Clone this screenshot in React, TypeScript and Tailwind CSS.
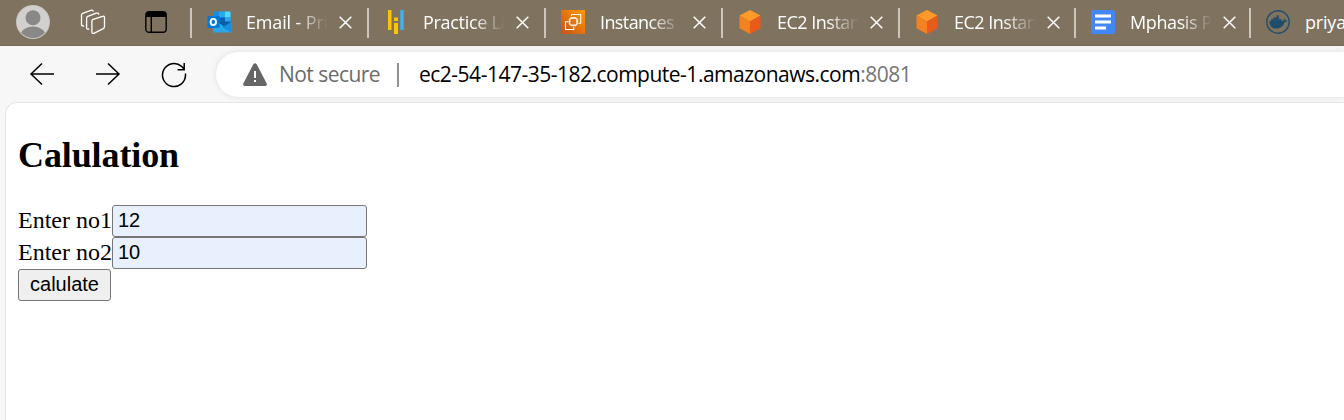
import type { ReactNode } from "react";

function OutlookIcon() {
  return (
    <svg width="25" height="24" viewBox="0 0 25 24">
      <rect x="6.500" y="1.500" width="17" height="12" rx="1" fill="#1490df" />
      <path d="M12 1.500h6v6h-6z" fill="#28a8ea" />
      <path d="M18 1.500h4.500a1 1 0 0 1 1 1v5H18z" fill="#50d9ff" />
      <path d="M18 7.500h5.500v5H18z" fill="#28a8ea" />
      <path d="M12 7.500h6v5h-6z" fill="#0364b8" />
      <path d="M6.500 12h11l7-.5V21a1.500 1.500 0 0 1-1.500 1.500H7.500A1.500 1.500 0 0 1 6 21z" fill="#28a8ea" />
      <path d="M24.500 11.500V21a1.500 1.500 0 0 1-.8 1.300L15 17z" fill="#1490df" />
      <path d="M12 13l5 3.500 7.500-5H18l-6-1z" fill="#0a5ea8" />
      <rect x="0.500" y="6" width="12" height="12" rx="1" fill="#0078d4" />
      <ellipse cx="6.300" cy="12" rx="2.700" ry="3.100" fill="none" stroke="#fff" strokeWidth="1.900" />
    </svg>
  );
}

function BarsIcon() {
  return (
    <svg width="24" height="24" viewBox="0 0 24 24">
      <path d="M0 0h3.500v20H0zM6 7.500h4V11H6zM6 13h4v11H6z" fill="#ffc400" />
      <path d="M12.300 0h3.400v20h-3.400z" fill="#3fb1ee" />
    </svg>
  );
}

function Ec2Icon() {
  return (
    <svg width="24" height="24" viewBox="0 0 24 24">
      <defs>
        <linearGradient id="ec2" x1="0" y1="1" x2="1" y2="0">
          <stop offset="0" stopColor="#c8511b" />
          <stop offset="1" stopColor="#ff9900" />
        </linearGradient>
      </defs>
      <path d="M0 0h24v24H0z" fill="url(#ec2)" />
      <g fill="none" stroke="#fff" strokeWidth="1.100">
        <rect x="8.900" y="8.100" width="7" height="7" rx="1.200" />
        <path d="M10.700 8V6.900M12.400 8V6.900M14.100 8V6.900M10.700 15.200v1.100M12.400 15.200v1.100M14.100 15.200v1.100M8.800 9.900H7.700M8.800 11.600H7.700M8.800 13.300H7.700M16 9.900h1.100M16 11.600h1.100M16 13.300h1.100" />
        <path d="M10.500 6V4.500h9.200v8.800h-2.200M7.500 11.800H4.500v7.700h8.300V17" />
      </g>
    </svg>
  );
}

function CubeIcon() {
  return (
    <svg width="24" height="24" viewBox="0 0 24 24">
      <path d="M12 0l10.500 5.600L12 11.400 1.500 5.600z" fill="#ff9a28" />
      <path d="M1.500 5.600L12 11.400V24L1.500 18.200z" fill="#f58220" />
      <path d="M22.500 5.600L12 11.400V24l10.500-5.800z" fill="#ea5b1b" />
    </svg>
  );
}

function FormsIcon() {
  return (
    <svg width="24" height="24" viewBox="0 0 24 24">
      <rect width="24" height="24" rx="2.500" fill="#4386f5" />
      <path d="M4 4.500h16v3H4zM4 10.500h16v3H4zM4 16.500h11v3H4z" fill="#fff" />
    </svg>
  );
}

function DockerIcon() {
  return (
    <svg width="24" height="24" viewBox="0 0 24 24">
      <circle cx="12" cy="12" r="11.200" fill="none" stroke="#264f6b" strokeWidth="1.400" />
      <path d="M3.300 11h14c.3-.8.100-1.700.6-2.600.9.500 1.200 1.200 1.300 1.900.8-.1 1.500 0 2.200.5-.5 1-1.500 1.300-2.700 1.300-1.400 4.200-4 6.500-8.200 6.500-4.600 0-7-2.600-7.200-7.600z" fill="#1f4c69" />
      <path d="M5 8.900h10.500V11H5zM7.500 7.200h5.600v2H7.500zM10.600 5.200h2.200v2.200h-2.200z" fill="#264f6b" />
    </svg>
  );
}

function CloseIcon() {
  return (
    <svg width="13" height="13" viewBox="0 0 13 13" className="shrink-0">
      <path d="M0.700 0.700l11.600 11.600M12.300 0.700L0.700 12.300" stroke="#fff" strokeWidth="1.500" />
    </svg>
  );
}

type TabProps = { icon: ReactNode; title: string; width: string; tracking: string; last?: boolean };

function Tab({ icon, title, width, tracking, last }: TabProps) {
  return (
    <div className={`flex h-[30px] shrink-0 items-start border-l-2 border-[#cbc5bb] pl-[15px] ${width}`}>
      <span className="mt-[2px] flex w-[25px] shrink-0">{icon}</span>
      <span
        className={`ml-[14px] w-[82px] shrink-0 whitespace-nowrap text-[18px] leading-[28px] text-white ${tracking} ${
          last ? "" : "[mask-image:linear-gradient(to_right,#000_60%,transparent_100%)]"
        }`}
      >
        {title}
      </span>
      {!last && (
        <span className="mt-[8px] ml-[11px] flex">
          <CloseIcon />
        </span>
      )}
    </div>
  );
}

const tabs: TabProps[] = [
  { icon: <OutlookIcon />, title: "Email - Pri", width: "w-[177px]", tracking: "tracking-[-0.15px]" },
  { icon: <span className="ml-1 flex"><BarsIcon /></span>, title: "Practice La", width: "w-[177px]", tracking: "tracking-[-0.3px]" },
  { icon: <Ec2Icon />, title: "Instances |", width: "w-[177px]", tracking: "tracking-[-0.6px]" },
  { icon: <CubeIcon />, title: "EC2 Instan", width: "w-[177px]", tracking: "tracking-[-0.5px]" },
  { icon: <CubeIcon />, title: "EC2 Instan", width: "w-[176px]", tracking: "tracking-[-0.5px]" },
  { icon: <FormsIcon />, title: "Mphasis P", width: "w-[175px]", tracking: "tracking-[-0.4px]" },
  { icon: <DockerIcon />, title: "priya", width: "w-[177px]", tracking: "tracking-[-0.2px]", last: true },
];

function TabStrip() {
  return (
    <div className="flex h-[46px] shrink-0 items-start overflow-hidden border-b border-[#766a57] bg-[#7f735f] pt-2">
      <div className="flex h-[28px] w-[190px] shrink-0 items-center pl-4">
        <svg width="34" height="34" viewBox="0 0 34 34" className="shrink-0">
          <defs>
            <clipPath id="face">
              <circle cx="17" cy="17" r="16" />
            </clipPath>
          </defs>
          <circle cx="17" cy="17" r="17" fill="#c8c6c4" />
          <circle cx="17" cy="17" r="16" fill="#d2d0ce" />
          <g clipPath="url(#face)" fill="#8a8886">
            <circle cx="17" cy="12.700" r="7.500" />
            <ellipse cx="17" cy="32" rx="13" ry="10.500" />
          </g>
        </svg>
        <svg width="26" height="26" viewBox="0 0 26 26" fill="none" stroke="#fff" strokeWidth="1.300" strokeLinejoin="round" strokeLinecap="round" className="ml-[30px] shrink-0">
          <path d="M12.500 10.700l10-3.400q2-.5 2 1.300v9.200q0 1.300-1.300 1.900l-9.300 4.600q-2 .6-2-1.300v-10.800q0-1 .6-1.500z" />
          <path d="M8.800 20q-2.200.6-2.200-1.300V9.100q0-1.200 1.200-1.700l8.400-3.200q2.200-.6 2.600 1" />
          <path d="M3.700 17q-2.200 0-2.200-1.600V6q0-1.200 1.200-1.700l8-3q1.900-.5 2.400.8" />
        </svg>
        <svg width="22" height="22" viewBox="0 0 22 22" className="ml-[39px] shrink-0">
          <rect x="0.800" y="0.800" width="20.400" height="20.400" rx="3.300" fill="none" stroke="#000" strokeWidth="1.400" />
          <path d="M1 4a3 3 0 0 1 3-3h14a3 3 0 0 1 3 3v2H1z" />
          <path d="M6.300 6v15" stroke="#000" strokeWidth="1.400" />
        </svg>
      </div>
      {tabs.map((tab, i) => (
        <Tab key={i} {...tab} />
      ))}
    </div>
  );
}

function Toolbar() {
  return (
    <div className="flex h-[56px] shrink-0 items-start bg-[#f7f7f7] pt-[6px]">
      <div className="flex h-[45px] w-[216px] shrink-0 items-center pl-[29px]">
        <svg width="26" height="26" viewBox="0 0 26 26" fill="none" stroke="#000" strokeWidth="1.500" className="shrink-0">
          <path d="M13 1.500L2 12l11 10.500M2 12h23" />
        </svg>
        <svg width="26" height="26" viewBox="0 0 26 26" fill="none" stroke="#000" strokeWidth="1.500" className="ml-[40px] shrink-0">
          <path d="M13 1.500L24 12 13 22.500M24 12H1" />
        </svg>
        <svg width="26" height="26" viewBox="0 0 26 26" fill="none" stroke="#000" strokeWidth="1.500" className="ml-[40px] shrink-0">
          <path d="M24.500 11.500V13A11.500 11.500 0 1 1 20.600 4.400L23.200 7M23.200 1v6.700H16.500" />
        </svg>
      </div>
      <div className="flex h-[45px] grow items-center rounded-l-full bg-white pl-[27px] text-[21px] shadow-[0_0_6px_rgba(0,0,0,0.1)]">
        <svg width="24" height="24" viewBox="0 0 24 24" className="shrink-0">
          <path d="M10.200 1.500q1.800-2.300 3.600 0L23.700 20.500q.7 2.400-1.500 2.500H1.800Q-.4 22.900.3 20.500z" fill="#666" />
          <path d="M11 8h2v7h-2zM11 17h2v2h-2z" fill="#fff" />
        </svg>
        <span className="ml-3 w-[106px] shrink-0 whitespace-nowrap tracking-[-0.55px] text-[#6b6b6b]">Not secure</span>
        <span className="ml-[12px] h-6 w-[2px] shrink-0 bg-[#919191]" />
        <span className="mt-px ml-[20px] whitespace-nowrap tracking-[-0.5px] text-black">
          ec2-54-147-35-182.compute-1.amazonaws.com<span className="text-[#767676]">:8081</span>
        </span>
      </div>
    </div>
  );
}

function Field({ label, value }: { label: string; value: string }) {
  return (
    <label className="flex h-8 items-center">
      <span className="w-[94px] pb-[2px] whitespace-nowrap">{label}</span>
      <input
        defaultValue={value}
        className="h-8 w-[255px] rounded-[3px] border border-[#767676] bg-[#e8f0fe] px-[5px] pb-[1px] font-['Liberation_Sans',Arial,sans-serif] text-[20px] text-black outline-none"
      />
    </label>
  );
}

export default function App() {
  return (
    <div className="flex h-[420px] flex-col overflow-hidden bg-[#f7f7f7] font-['Open_Sans','Noto_Sans',sans-serif]">
      <TabStrip />
      <Toolbar />
      <main className="ml-[5px] grow rounded-tl-[12px] border-t border-l border-[#e4e4e4] bg-white pl-3 font-['Liberation_Serif','Times_New_Roman',serif] text-[24px] text-black">
        <h2 className="mt-[31px] mb-[29px] text-[36px] leading-[42px] font-bold tracking-[-0.1px]">Calulation</h2>
        <Field label="Enter no1" value="12" />
        <Field label="Enter no2" value="10" />
        <button className="block h-8 w-[93px] rounded-[3px] border border-[#767676] bg-[#efefef] pb-[2px] font-['Liberation_Sans',Arial,sans-serif] text-[20px] leading-[28px]">
          calulate
        </button>
      </main>
    </div>
  );
}
